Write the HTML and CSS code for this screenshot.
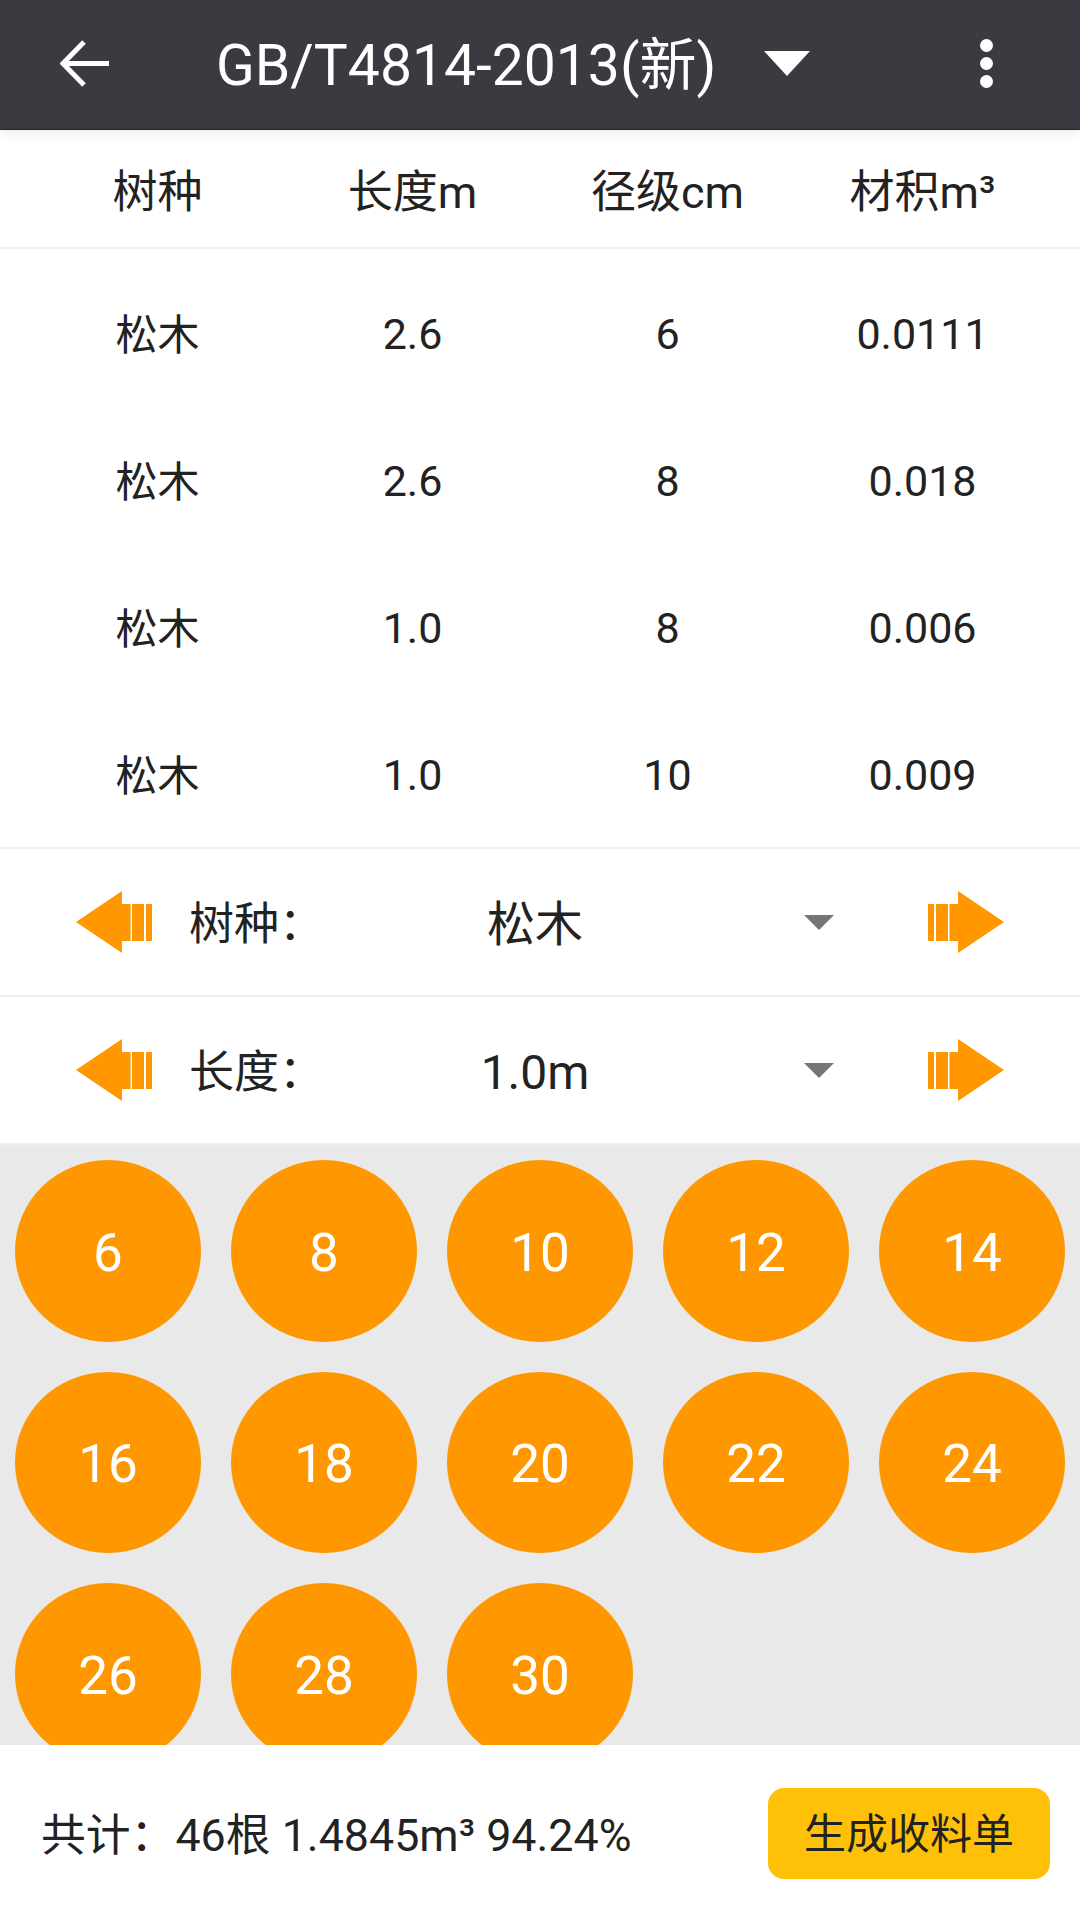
FILE: index.html
```html
<!DOCTYPE html>
<html lang="zh-CN">
<head>
    <meta charset="UTF-8">
    <meta name="viewport" content="width=device-width, initial-scale=1.0">
    <title>GB/T4814-2013(新)</title>
    <link rel="stylesheet" href="styles.css">
</head>
<body>
    <div class="topbar">
        <svg class="back" width="49" height="47" viewBox="0 0 49 47">
            <path d="M24 2 L3 23.5 L24 45 M3 23.5 H49" fill="none" stroke="#fff" stroke-width="5"/>
        </svg>
        <div class="title">GB/T4814-2013(新)</div>
        <svg class="title-caret" width="46" height="25" viewBox="0 0 46 25">
            <path d="M0 0 H46 L23 25 Z" fill="#fff"/>
        </svg>
        <div class="more"><i></i><i></i><i></i></div>
    </div>

    <div class="head-row">
        <div>树种</div>
        <div>长度m</div>
        <div>径级cm</div>
        <div>材积m³</div>
    </div>

    <div class="list">
        <div class="row"><div class="name">松木</div><div>2.6</div><div>6</div><div>0.0111</div></div>
        <div class="row"><div class="name">松木</div><div>2.6</div><div>8</div><div>0.018</div></div>
        <div class="row"><div class="name">松木</div><div>1.0</div><div>8</div><div>0.006</div></div>
        <div class="row"><div class="name">松木</div><div>1.0</div><div>10</div><div>0.009</div></div>
    </div>

    <div class="picker">
        <svg class="step" width="77" height="62" viewBox="0 0 77 62">
            <path d="M0 31 L46 0 V13 H54.5 V50 H46 V62 Z M56 13 H68 V50 H56 Z M70 13 H76 V50 H70 Z" fill="#ff9800"/>
        </svg>
        <div class="picker-label">树种：</div>
        <div class="picker-value">松木</div>
        <div class="caret"></div>
        <svg class="step" width="77" height="62" viewBox="0 0 77 62">
            <path d="M77 31 L31 0 V13 H22.5 V50 H31 V62 Z M21 13 H9 V50 H21 Z M7 13 H1 V50 H7 Z" fill="#ff9800"/>
        </svg>
    </div>
    <div class="picker">
        <svg class="step" width="77" height="62" viewBox="0 0 77 62">
            <path d="M0 31 L46 0 V13 H54.5 V50 H46 V62 Z M56 13 H68 V50 H56 Z M70 13 H76 V50 H70 Z" fill="#ff9800"/>
        </svg>
        <div class="picker-label">长度：</div>
        <div class="picker-value">1.0m</div>
        <div class="caret"></div>
        <svg class="step" width="77" height="62" viewBox="0 0 77 62">
            <path d="M77 31 L31 0 V13 H22.5 V50 H31 V62 Z M21 13 H9 V50 H21 Z M7 13 H1 V50 H7 Z" fill="#ff9800"/>
        </svg>
    </div>

    <div class="sizes">
        <div class="size"><span>6</span></div>
        <div class="size"><span>8</span></div>
        <div class="size"><span>10</span></div>
        <div class="size"><span>12</span></div>
        <div class="size"><span>14</span></div>
        <div class="size"><span>16</span></div>
        <div class="size"><span>18</span></div>
        <div class="size"><span>20</span></div>
        <div class="size"><span>22</span></div>
        <div class="size"><span>24</span></div>
        <div class="size"><span>26</span></div>
        <div class="size"><span>28</span></div>
        <div class="size"><span>30</span></div>
    </div>

    <div class="footer">
        <div class="total">共计：46根 1.4845m³ 94.24%</div>
        <div class="make">生成收料单</div>
    </div>
</body>
</html>
```

FILE: styles.css
```css
body {
    margin: 0;
    width: 1080px;
    height: 1920px;
    overflow: hidden;
    background: #fff;
    color: #222;
    font-family: Roboto, "Noto Sans CJK SC", sans-serif;
}
.topbar {
    position: relative;
    height: 129px;
    display: flex;
    align-items: center;
    background: #3a3b40;
    border-bottom: 1px solid #222;
    box-shadow: 0 4px 12px rgba(0, 0, 0, 0.07);
    color: #fff;
}
.back {
    margin-left: 60px;
    margin-bottom: 2px;
}
.title {
    margin-left: 107px;
    padding-bottom: 10px;
    font-size: 57px;
    width: 500px;
    white-space: nowrap;
}
.title-caret {
    margin-left: 48px;
    margin-bottom: 2px;
}
.more {
    margin-left: 170px;
    margin-bottom: 3px;
    display: flex;
    flex-direction: column;
    gap: 5px;
}
.more i {
    width: 13px;
    height: 13px;
    border-radius: 50%;
    background: #fff;
}
.head-row {
    height: 119px;
    display: grid;
    grid-template-columns: repeat(4, 255px);
    padding: 0 30px 1px;
    align-items: center;
    text-align: center;
    font-size: 45px;
    border-bottom: 2px solid #eee;
    box-sizing: border-box;
}
.list {
    padding-top: 10px;
    border-bottom: 2px solid #eee;
}
.row {
    height: 147px;
    display: grid;
    grid-template-columns: repeat(4, 255px);
    padding: 0 30px;
    align-items: center;
    text-align: center;
    font-size: 43px;
    line-height: 60px;
}
.row div {
    padding-top: 3px;
}
.row .name {
    padding-top: 6px;
    font-size: 42px;
    line-height: 56px;
}
.picker {
    height: 146px;
    display: flex;
    align-items: center;
    padding-left: 76px;
    border-bottom: 2px solid #eee;
}
.picker:last-of-type {
    border-bottom: none;
}
.picker-label {
    margin-left: 36px;
    width: 111px;
    padding-bottom: 3px;
    font-size: 45px;
    white-space: nowrap;
}
.picker-value {
    width: 470px;
    padding-top: 5px;
    text-align: center;
    font-size: 48px;
    line-height: 64px;
}
.caret {
    margin-left: 34px;
    margin-right: 93px;
    width: 0;
    height: 0;
    border-left: 15px solid transparent;
    border-right: 15px solid transparent;
    border-top: 15px solid #757575;
}
.sizes {
    height: 600px;
    overflow: hidden;
    display: grid;
    grid-template-columns: repeat(5, 216px);
    grid-auto-rows: 211.5px;
    background: #e9e9e9;
}
.size {
    padding: 15px;
}
.size span {
    display: flex;
    align-items: center;
    justify-content: center;
    box-sizing: border-box;
    height: 181.5px;
    padding-top: 4px;
    border-radius: 50%;
    background: #ff9800;
    color: #fff;
    font-size: 53px;
}
.footer {
    height: 176px;
    display: flex;
    align-items: center;
    justify-content: space-between;
    padding: 0 30px 0 41px;
}
.total {
    padding-bottom: 4px;
    font-size: 44.8px;
    white-space: nowrap;
}
.make {
    width: 282px;
    height: 91px;
    line-height: 93px;
    text-align: center;
    border-radius: 16px;
    background: #ffc107;
    font-size: 42px;
}
```
